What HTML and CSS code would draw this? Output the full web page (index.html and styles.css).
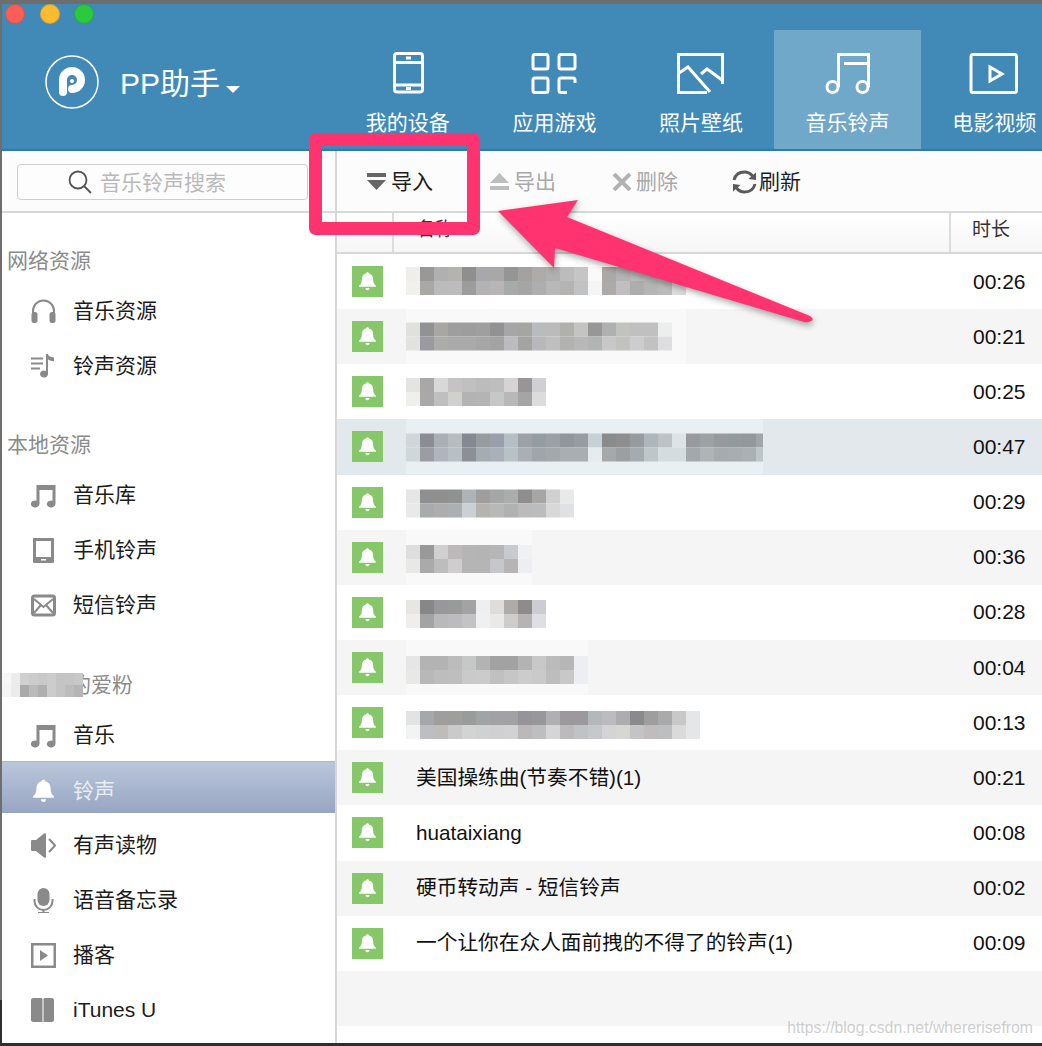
FILE: index.html
```html
<!DOCTYPE html>
<html lang="zh-CN">
<head>
<meta charset="utf-8">
<title>PP助手</title>
<link rel="stylesheet" href="styles.css">
</head>
<body>
<svg class="defs" width="0" height="0">
  <symbol id="bell" viewBox="0 0 24 24"><path d="M12 1.5c1 0 1.700.7 1.800 1.600 3.400.8 5 3.500 5 7 0 3.800 1 5.700 3.200 7.400v1.500H2v-1.500c2.200-1.700 3.200-3.600 3.200-7.400 0-3.500 1.600-6.200 5-7 .1-.9.800-1.600 1.800-1.600zM9.500 20.500h5c0 1.500-1 2.500-2.500 2.500s-2.500-1-2.500-2.500z"/></symbol>
  <symbol id="note" viewBox="0 0 25 25"><path d="M5.500 2h19v19h-.1a4.300 3.500 0 1 1-2.900-3.300V7H8.500v14h-.1a4.300 3.500 0 1 1-2.900-3.300z"/></symbol>
</svg>
<div class="app">
  <header class="header">
    <div class="lights"><i class="light red"></i><i class="light yellow"></i><i class="light green"></i></div>
    <div class="brand">
      <svg class="logo" width="56" height="56" viewBox="0 0 56 56">
        <circle cx="28" cy="28" r="26" fill="none" stroke="#fff" stroke-width="1.500"/>
        <path d="M19 38V26a9 9 0 1 1 9 9" fill="none" stroke="#fff" stroke-width="8" stroke-linecap="round"/>
        <circle cx="28" cy="27" r="2" fill="#fff"/>
      </svg>
      <span class="brand-name">PP助手</span>
      <i class="caret"></i>
    </div>
    <nav class="tabs">
      <div class="tab">
        <svg class="tab-icon" width="60" height="44" viewBox="0 0 60 44"><rect x="16.500" y="2.500" width="28" height="38.500" rx="2.500"/><path d="M17 11.500h27M17 34h27M28 7h5M28 37.500h5"/></svg>
        <span>我的设备</span>
      </div>
      <div class="tab">
        <svg class="tab-icon" width="60" height="44" viewBox="0 0 60 44"><rect x="9" y="3.500" width="15" height="14.500" rx="2"/><rect x="35" y="3.500" width="16" height="14.500" rx="2"/><rect x="9" y="27" width="15" height="14.500" rx="2"/><path d="M51 32v-3a2 2 0 0 0-2-2H37a2 2 0 0 0-2 2v10.500a2 2 0 0 0 2 2h6"/></svg>
        <span>应用游戏</span>
      </div>
      <div class="tab">
        <svg class="tab-icon" width="60" height="44" viewBox="0 0 60 44"><path d="M36 41.500H7.500V3.500h44V33"/><path d="M8 22l9-6 22 25M30 23l6-5 15 11"/></svg>
        <span>照片壁纸</span>
      </div>
      <div class="tab active">
        <svg class="tab-icon" width="60" height="44" viewBox="0 0 60 44"><circle cx="14.500" cy="36" r="5.500"/><circle cx="44.500" cy="36" r="5.500"/><path d="M20.500 36V3.500h30V36M26 12.500h24"/></svg>
        <span>音乐铃声</span>
      </div>
      <div class="tab">
        <svg class="tab-icon" width="60" height="44" viewBox="0 0 60 44"><rect x="7" y="3.500" width="45.500" height="38" rx="2"/><path d="M26 16l12 7-12 7z"/></svg>
        <span>电影视频</span>
      </div>
    </nav>
  </header>

  <div class="main">
    <aside class="sidebar">
      <div class="search-bar">
        <div class="search">
          <svg width="26" height="26" viewBox="0 0 26 26" class="search-icon"><circle cx="10" cy="11" r="8.500"/><path d="M16 17l7 7"/></svg>
          <span>音乐铃声搜索</span>
        </div>
      </div>
      <div class="section first"><span class="section-label">网络资源</span></div>
      <div class="item">
        <svg class="item-icon" width="25" height="25" viewBox="0 0 25 25"><path class="line thin" d="M2 15v-3a10.500 10.500 0 0 1 21 0v3" /><rect x="0.500" y="13" width="6" height="11" rx="2.500"/><rect x="18.500" y="13" width="6" height="11" rx="2.500"/></svg>
        <span>音乐资源</span>
      </div>
      <div class="item">
        <svg class="item-icon" width="25" height="25" viewBox="0 0 25 25"><path class="line thin" d="M0 4.500h12M0 9.500h12M0 14.500h9"/><path d="M15 0h2c0 2 2 3 6 3.500V7c-3 0-5-.8-6-1.800V20a4 3.500 0 1 1-2-3z"/></svg>
        <span>铃声资源</span>
      </div>
      <div class="section second"><span class="section-label">本地资源</span></div>
      <div class="item">
        <svg class="item-icon" width="25" height="25"><use href="#note"/></svg>
        <span>音乐库</span>
      </div>
      <div class="item">
        <svg class="item-icon" width="25" height="25" viewBox="0 0 25 25"><path fill-rule="evenodd" d="M3 0h19a1 1 0 0 1 1 1v23a1 1 0 0 1-1 1H3a1 1 0 0 1-1-1V1a1 1 0 0 1 1-1zm2 3v16h15V3zM10 21v1.500h5V21z"/></svg>
        <span>手机铃声</span>
      </div>
      <div class="item">
        <svg class="item-icon" width="25" height="25" viewBox="0 0 25 25"><rect class="line" x="1.500" y="3" width="22" height="19" rx="2"/><path class="line thin" d="M3 6l9.500 8L22 6M3 20l7-8M22 20l-7-8"/></svg>
        <span>短信铃声</span>
      </div>
      <div class="section">
        <span class="section-label fans">的爱粉</span>
        <svg class="fans-blur" width="83" height="24">
          <rect x="2" fill="#f7f7f7"/><rect x="11" fill="#ececec"/><rect x="20" fill="#d0d0d0"/><rect x="29" fill="#ccc"/><rect x="38" fill="#c8c8c8"/><rect x="47" fill="#ccc"/><rect x="56" fill="#c4c4c4"/><rect x="65" fill="#c5c5c5"/><rect x="74" fill="#c8c8c8"/>
          <g transform="translate(0,12)"><rect x="2" fill="#f5f5f5"/><rect x="11" fill="#ececec"/><rect x="20" fill="#aaa"/><rect x="29" fill="#bbb"/><rect x="38" fill="#b0b0b0"/><rect x="47" fill="#ccc"/><rect x="56" fill="#c4c4c4"/><rect x="65" fill="#bcbcbc"/><rect x="74" fill="#b5b5b5"/></g>
        </svg>
      </div>
      <div class="item">
        <svg class="item-icon" width="25" height="25"><use href="#note"/></svg>
        <span>音乐</span>
      </div>
      <div class="item selected">
        <svg class="item-icon" width="25" height="25"><use href="#bell"/></svg>
        <span>铃声</span>
      </div>
      <div class="item">
        <svg class="item-icon" width="25" height="25" viewBox="0 0 25 25"><path d="M0 8q0-1 1-1h4l8-6.500q2-1 2 1v22q0 2-2 1L5 18H1q-1 0-1-1z"/><path class="line thin" d="M18 6l6 6.500-6 6.500"/></svg>
        <span>有声读物</span>
      </div>
      <div class="item">
        <svg class="item-icon" width="25" height="25" viewBox="0 0 25 25"><rect x="6.500" y="0" width="12" height="18" rx="6"/><path class="line thin" d="M3.500 11v2a9 9 0 0 0 18 0v-2M12.500 22v3M7 25h11"/></svg>
        <span>语音备忘录</span>
      </div>
      <div class="item">
        <svg class="item-icon" width="25" height="25" viewBox="0 0 25 25"><rect class="line" x="1" y="1" width="23" height="23"/><path d="M9 7l8 5.500-8 5.500z"/></svg>
        <span>播客</span>
      </div>
      <div class="item">
        <svg class="item-icon" width="25" height="25" viewBox="0 0 25 25"><path d="M2 0h8c1 0 1.500.5 1.500 1.500V24h-9C1 24 0 23 0 22V2C0 1 1 0 2 0zM12.500 1.500c0-1 .5-1.500 1.500-1.500H21c1 0 2 1 2 2v20c0 1-1 2-2 2h-8.500z"/></svg>
        <span class="latin">iTunes U</span>
      </div>
    </aside>

    <section class="content">
      <div class="toolbar">
        <div class="tool import">
          <svg width="20" height="18" viewBox="0 0 20 18"><path d="M0 0h19v4H0zM0 7h19l-9.500 10z"/></svg>
          <span>导入</span>
        </div>
        <div class="tool disabled">
          <svg width="20" height="18" viewBox="0 0 20 18"><path d="M9.500 0L19 10H0zM0 13h19v4H0z"/></svg>
          <span>导出</span>
        </div>
        <div class="tool disabled">
          <svg class="cross" width="20" height="18" viewBox="0 0 20 18"><path d="M2 1l16 16M18 1L2 17"/></svg>
          <span>删除</span>
        </div>
        <div class="tool refresh">
          <svg width="25" height="24" viewBox="0 0 25 24"><path class="arc" d="M2 10C3.500 4 8 2 12.500 2c3.500 0 6 1.500 8 4M23 14c-1.500 6-6 8-10.500 8-3.500 0-6-1.500-8-4"/><path d="M16.500 9L24 10V2.500zM8.500 15L1 14v7.500z"/></svg>
          <span>刷新</span>
        </div>
      </div>
      <div class="thead">
        <div class="th th-icon"></div>
        <div class="th th-name">名称</div>
        <div class="th th-time">时长</div>
      </div>
      <div class="rows">
        <div class="row">
          <span class="badge"><svg width="31" height="31"><use href="#bell" x="5.500" y="5" width="20" height="20"/></svg></span>
          <div class="name"><svg class="mosaic" width="357" height="55"><g transform="translate(0,13)"><rect x="0" fill="#efeeeb"/><rect x="14" fill="#9a9897"/><rect x="28" fill="#b0b0b0"/><rect x="42" fill="#b5b3b0"/><rect x="56" fill="#908f8f"/><rect x="70" fill="#a8a7ab"/><rect x="84" fill="#a9a8a8"/><rect x="98" fill="#959596"/><rect x="112" fill="#a3a2a1"/><rect x="126" fill="#adacab"/><rect x="140" fill="#b0b0b0"/><rect x="154" fill="#bcbcbc"/><rect x="168" fill="#c5c5c5"/><rect x="182" fill="#fafafa"/><rect x="196" fill="#aba8a8"/><rect x="210" fill="#b5b3b4"/><rect x="224" fill="#bbb"/><rect x="238" fill="#bbb"/><rect x="252" fill="#c2c2c2"/></g><g transform="translate(0,27)"><rect x="0" fill="#f0f0ec"/><rect x="14" fill="#a9a8a6"/><rect x="28" fill="#bbb"/><rect x="42" fill="#bcbcbc"/><rect x="56" fill="#9c9c9c"/><rect x="70" fill="#b4b3b4"/><rect x="84" fill="#b8b4b8"/><rect x="98" fill="#a8aaa9"/><rect x="112" fill="#a5a5a5"/><rect x="126" fill="#aeaeae"/><rect x="140" fill="#b8b8b8"/><rect x="154" fill="#b5b4b2"/><rect x="168" fill="#c0c2c4"/><rect x="182" fill="#f5f5f5"/><rect x="196" fill="#adaaaa"/><rect x="210" fill="#c0bec0"/><rect x="224" fill="#adadad"/><rect x="238" fill="#b5b5b5"/><rect x="252" fill="#bbb"/><rect x="266" fill="#dcdcdc"/></g></svg></div>
          <span class="time">00:26</span>
        </div>
        <div class="row even">
          <span class="badge"><svg width="31" height="31"><use href="#bell" x="5.500" y="5" width="20" height="20"/></svg></span>
          <div class="name"><svg class="mosaic patch" width="280" height="55"><g transform="translate(0,13.500)"><rect x="0" fill="#e0e0dc"/><rect x="14" fill="#909293"/><rect x="28" fill="#a9a7a4"/><rect x="42" fill="#9e9e9e"/><rect x="56" fill="#9d9d9d"/><rect x="70" fill="#9f9f9f"/><rect x="84" fill="#929295"/><rect x="98" fill="#a6a5a8"/><rect x="112" fill="#a5a5a2"/><rect x="126" fill="#b9bcbe"/><rect x="140" fill="#bbb"/><rect x="154" fill="#b0b0ac"/><rect x="168" fill="#c4c4c2"/><rect x="182" fill="#979797"/><rect x="196" fill="#afb0b0"/><rect x="210" fill="#c2c2be"/><rect x="224" fill="#c0c0c0"/><rect x="238" fill="#c0c0c0"/><rect x="252" fill="#eceeee"/></g><g transform="translate(0,27.500)"><rect x="0" fill="#e2e2e0"/><rect x="14" fill="#9a9a9f"/><rect x="28" fill="#acacaa"/><rect x="42" fill="#aaa"/><rect x="56" fill="#aaa"/><rect x="70" fill="#a6a6a6"/><rect x="84" fill="#a3a3a1"/><rect x="98" fill="#bcbcc0"/><rect x="112" fill="#a4a4a2"/><rect x="126" fill="#b8b8bc"/><rect x="140" fill="#bfbfc0"/><rect x="154" fill="#b2b2b0"/><rect x="168" fill="#b8b8b8"/><rect x="182" fill="#b2b4b4"/><rect x="196" fill="#c8c8c8"/><rect x="210" fill="#c2c2c0"/><rect x="224" fill="#cdcdd0"/><rect x="238" fill="#c2c2c2"/><rect x="252" fill="#dedee0"/></g></svg></div>
          <span class="time">00:21</span>
        </div>
        <div class="row">
          <span class="badge"><svg width="31" height="31"><use href="#bell" x="5.500" y="5" width="20" height="20"/></svg></span>
          <div class="name"><svg class="mosaic" width="140" height="55"><g transform="translate(0,14)"><rect x="0" fill="#e4e4e2"/><rect x="14" fill="#a8a8a8"/><rect x="28" fill="#d8d8d8"/><rect x="42" fill="#c6c3c4"/><rect x="56" fill="#c0c0c0"/><rect x="70" fill="#bcbcbc"/><rect x="84" fill="#bebebe"/><rect x="98" fill="#d5d3d4"/><rect x="112" fill="#989596"/><rect x="126" fill="#d0d0d4"/></g><g transform="translate(0,28)"><rect x="0" fill="#efefeb"/><rect x="14" fill="#aaa8a9"/><rect x="28" fill="#c0bfc0"/><rect x="42" fill="#d0d0ce"/><rect x="56" fill="#b4b3b3"/><rect x="70" fill="#b4b4b4"/><rect x="84" fill="#c6c7c9"/><rect x="98" fill="#b8b8b8"/><rect x="112" fill="#a5a5a5"/><rect x="126" fill="#dcdcdc"/></g></svg></div>
          <span class="time">00:25</span>
        </div>
        <div class="row hover">
          <span class="badge"><svg width="31" height="31"><use href="#bell" x="5.500" y="5" width="20" height="20"/></svg></span>
          <div class="name"><svg class="mosaic patch" width="357" height="55"><g transform="translate(0,14.500)"><rect x="0" fill="#cfd7db"/><rect x="14" fill="#8a8e94"/><rect x="28" fill="#a8b0b5"/><rect x="42" fill="#b5bdc0"/><rect x="56" fill="#858a92"/><rect x="70" fill="#979ca0"/><rect x="84" fill="#999fac"/><rect x="98" fill="#b5bec2"/><rect x="112" fill="#9ba1a6"/><rect x="126" fill="#949da1"/><rect x="140" fill="#9aa0a5"/><rect x="154" fill="#8f979d"/><rect x="168" fill="#949da1"/><rect x="182" fill="#c7d0d5"/><rect x="196" fill="#8a8c8c"/><rect x="210" fill="#8f8f8f"/><rect x="224" fill="#959b9f"/><rect x="238" fill="#adb6ba"/><rect x="252" fill="#bcc3c7"/><rect x="266" fill="#dde3e6"/><rect x="280" fill="#999a9f"/><rect x="294" fill="#9da2a5"/><rect x="308" fill="#969b9f"/><rect x="322" fill="#939a9e"/><rect x="336" fill="#93989c"/><rect x="350" fill="#a0a5aa"/></g><g transform="translate(0,28.500)"><rect x="0" fill="#cfd7db"/><rect x="14" fill="#9a9ea3"/><rect x="28" fill="#aeb5bd"/><rect x="42" fill="#b8c0c4"/><rect x="56" fill="#8b9096"/><rect x="70" fill="#a4aeb2"/><rect x="84" fill="#a9b0ba"/><rect x="98" fill="#b8c1c5"/><rect x="112" fill="#a9afb4"/><rect x="126" fill="#9fa5aa"/><rect x="140" fill="#a3a8ad"/><rect x="154" fill="#a8aeb2"/><rect x="168" fill="#a9aeb3"/><rect x="182" fill="#e5ecf0"/><rect x="196" fill="#a5a9aa"/><rect x="210" fill="#9c9f9f"/><rect x="224" fill="#a3acb0"/><rect x="238" fill="#bdc7ca"/><rect x="252" fill="#d5dcdf"/><rect x="266" fill="#d5dcdf"/><rect x="280" fill="#a3a8ac"/><rect x="294" fill="#afb4b7"/><rect x="308" fill="#a6abb0"/><rect x="322" fill="#a8adb1"/><rect x="336" fill="#abb0b5"/><rect x="350" fill="#bec5c8"/></g></svg></div>
          <span class="time">00:47</span>
        </div>
        <div class="row">
          <span class="badge"><svg width="31" height="31"><use href="#bell" x="5.500" y="5" width="20" height="20"/></svg></span>
          <div class="name"><svg class="mosaic" width="168" height="55"><g transform="translate(0,14.500)"><rect x="0" fill="#e5e6e5"/><rect x="14" fill="#8e8f91"/><rect x="28" fill="#8f8f8e"/><rect x="42" fill="#909292"/><rect x="56" fill="#b0b3b5"/><rect x="70" fill="#a09e9c"/><rect x="84" fill="#a4a6a8"/><rect x="98" fill="#abadac"/><rect x="112" fill="#8f8e8d"/><rect x="126" fill="#a6a6a6"/><rect x="140" fill="#d0d0d0"/><rect x="154" fill="#e8eaea"/></g><g transform="translate(0,28.500)"><rect x="0" fill="#e8eae8"/><rect x="14" fill="#a8aaac"/><rect x="28" fill="#adadad"/><rect x="42" fill="#abb0b0"/><rect x="56" fill="#cdd0d3"/><rect x="70" fill="#b5b3b0"/><rect x="84" fill="#b8b8b8"/><rect x="98" fill="#b0b2b2"/><rect x="112" fill="#bbb"/><rect x="126" fill="#babcbe"/><rect x="140" fill="#d8d8d8"/><rect x="154" fill="#dfe1e3"/></g></svg></div>
          <span class="time">00:29</span>
        </div>
        <div class="row even">
          <span class="badge"><svg width="31" height="31"><use href="#bell" x="5.500" y="5" width="20" height="20"/></svg></span>
          <div class="name"><svg class="mosaic patch" width="126" height="55"><g transform="translate(0,15)"><rect x="0" fill="#dedede"/><rect x="14" fill="#999"/><rect x="28" fill="#d0d0d0"/><rect x="42" fill="#bdb9ba"/><rect x="56" fill="#b5b5b5"/><rect x="70" fill="#b4b4b4"/><rect x="84" fill="#b6b6b8"/><rect x="98" fill="#c8cacd"/><rect x="112" fill="#eff1f2"/></g><g transform="translate(0,29)"><rect x="0" fill="#e8e8e6"/><rect x="14" fill="#aaa"/><rect x="28" fill="#bdbdbd"/><rect x="42" fill="#cfcdce"/><rect x="56" fill="#b5b5b5"/><rect x="70" fill="#b5b5b5"/><rect x="84" fill="#c6c7ca"/><rect x="98" fill="#b6b4b5"/><rect x="112" fill="#eceef1"/></g></svg></div>
          <span class="time">00:36</span>
        </div>
        <div class="row">
          <span class="badge"><svg width="31" height="31"><use href="#bell" x="5.500" y="5" width="20" height="20"/></svg></span>
          <div class="name"><svg class="mosaic" width="140" height="55"><g transform="translate(0,15)"><rect x="0" fill="#e8e6e3"/><rect x="14" fill="#878787"/><rect x="28" fill="#98989b"/><rect x="42" fill="#999b9b"/><rect x="56" fill="#a3a3a3"/><rect x="70" fill="#edeff0"/><rect x="84" fill="#dfdddc"/><rect x="98" fill="#aeaca9"/><rect x="112" fill="#8f8b8c"/><rect x="126" fill="#cdccd2"/></g><g transform="translate(0,29)"><rect x="0" fill="#f0eeed"/><rect x="14" fill="#a2a4a4"/><rect x="28" fill="#b9b9bc"/><rect x="42" fill="#bcbcbe"/><rect x="56" fill="#c3c3c6"/><rect x="70" fill="#eff0f2"/><rect x="84" fill="#ebe9e8"/><rect x="98" fill="#cfcdcb"/><rect x="112" fill="#b6b3b5"/><rect x="126" fill="#dfdfe3"/></g></svg></div>
          <span class="time">00:28</span>
        </div>
        <div class="row even">
          <span class="badge"><svg width="31" height="31"><use href="#bell" x="5.500" y="5" width="20" height="20"/></svg></span>
          <div class="name"><svg class="mosaic patch" width="182" height="55"><g transform="translate(0,16)"><rect x="0" fill="#e6e6e6"/><rect x="14" fill="#b3b3b3"/><rect x="28" fill="#b3b3b3"/><rect x="42" fill="#bcbcbc"/><rect x="56" fill="#c6c8c8"/><rect x="70" fill="#b3b3b3"/><rect x="84" fill="#a2a2a2"/><rect x="98" fill="#a2a2a2"/><rect x="112" fill="#b3b3b3"/><rect x="126" fill="#c8c8c8"/><rect x="140" fill="#bbb"/><rect x="154" fill="#b6b6b6"/><rect x="168" fill="#eceef2"/></g><g transform="translate(0,30)"><rect x="0" fill="#e8e8e6"/><rect x="14" fill="#b8b8b8"/><rect x="28" fill="#bdbdbd"/><rect x="42" fill="#bebebe"/><rect x="56" fill="#cacaca"/><rect x="70" fill="#cbcbcb"/><rect x="84" fill="#c0c0c0"/><rect x="98" fill="#c6c6c6"/><rect x="112" fill="#ccc"/><rect x="126" fill="#cacaca"/><rect x="140" fill="#bdbdbd"/><rect x="154" fill="#c8c8c8"/><rect x="168" fill="#eceef2"/></g></svg></div>
          <span class="time">00:04</span>
        </div>
        <div class="row">
          <span class="badge"><svg width="31" height="31"><use href="#bell" x="5.500" y="5" width="20" height="20"/></svg></span>
          <div class="name"><svg class="mosaic" width="294" height="55"><g transform="translate(0,16)"><rect x="0" fill="#e3e3e5"/><rect x="14" fill="#a5a8ab"/><rect x="28" fill="#a09e9c"/><rect x="42" fill="#9e9e9c"/><rect x="56" fill="#9a9b9b"/><rect x="70" fill="#a0a4a4"/><rect x="84" fill="#a2a2a4"/><rect x="98" fill="#a2a2a4"/><rect x="112" fill="#96949a"/><rect x="126" fill="#98989b"/><rect x="140" fill="#b0b0b2"/><rect x="154" fill="#9b999b"/><rect x="168" fill="#9b999b"/><rect x="182" fill="#b5b8b8"/><rect x="196" fill="#bcbcc0"/><rect x="210" fill="#aeacae"/><rect x="224" fill="#8a8a8c"/><rect x="238" fill="#9e9e9e"/><rect x="252" fill="#aaa"/><rect x="266" fill="#c8c8c8"/><rect x="280" fill="#e4e6e8"/></g><g transform="translate(0,30)"><rect x="0" fill="#f2f4f4"/><rect x="14" fill="#bcbec2"/><rect x="28" fill="#bfbcbc"/><rect x="42" fill="#cacaca"/><rect x="56" fill="#d2d4d4"/><rect x="70" fill="#d0d2d2"/><rect x="84" fill="#d0d0d2"/><rect x="98" fill="#d2d2d4"/><rect x="112" fill="#bab8b8"/><rect x="126" fill="#bcbec0"/><rect x="140" fill="#d5d5d5"/><rect x="154" fill="#bcbaba"/><rect x="168" fill="#c0c2c4"/><rect x="182" fill="#c6c8cc"/><rect x="196" fill="#d4d4d6"/><rect x="210" fill="#d6d6d2"/><rect x="224" fill="#c4c4c6"/><rect x="238" fill="#c0bcbe"/><rect x="252" fill="#bcbec0"/><rect x="266" fill="#dadada"/><rect x="280" fill="#e4e6e8"/></g></svg></div>
          <span class="time">00:13</span>
        </div>
        <div class="row even">
          <span class="badge"><svg width="31" height="31"><use href="#bell" x="5.500" y="5" width="20" height="20"/></svg></span>
          <div class="name title">美国操练曲(节奏不错)(1)</div>
          <span class="time">00:21</span>
        </div>
        <div class="row">
          <span class="badge"><svg width="31" height="31"><use href="#bell" x="5.500" y="5" width="20" height="20"/></svg></span>
          <div class="name title">huataixiang</div>
          <span class="time">00:08</span>
        </div>
        <div class="row even">
          <span class="badge"><svg width="31" height="31"><use href="#bell" x="5.500" y="5" width="20" height="20"/></svg></span>
          <div class="name title">硬币转动声 - 短信铃声</div>
          <span class="time">00:02</span>
        </div>
        <div class="row">
          <span class="badge"><svg width="31" height="31"><use href="#bell" x="5.500" y="5" width="20" height="20"/></svg></span>
          <div class="name title">一个让你在众人面前拽的不得了的铃声(1)</div>
          <span class="time">00:09</span>
        </div>
        <div class="row even"></div>
      </div>
    </section>
  </div>
</div>

<svg class="markup" width="1042" height="1046" viewBox="0 0 1042 1046">
  <rect class="frame" x="315.500" y="139.500" width="158" height="89"/>
  <path class="arrow" d="M498 211L578 200L567 217L810 316Q815 320 811 321Q808 323 804 322L555 248L554 268Z"/>
</svg>
<div class="watermark">https://blog.csdn.net/whererisefrom</div>
</body>
</html>
```
FILE: styles.css
```css
* { box-sizing: border-box; }

html, body {
  margin: 0;
  padding: 0;
}

body {
  position: relative;
  width: 1042px;
  height: 1046px;
  overflow: hidden;
  background: #6e6e6e;
  font-family: "Liberation Sans", "Noto Sans CJK SC", sans-serif;
  font-size: 21px;
  color: #1c1c1c;
}

.defs { position: absolute; }

.app {
  display: flex;
  flex-direction: column;
  height: 1046px;
  padding: 4px 0 3px 2px;
  background: linear-gradient(#6e6e6e 0 1000px, #2e2e2e 1000px);
}

/* Header */
.header {
  position: relative;
  display: flex;
  flex: none;
  height: 147px;
  background: #418ab7;
  border-bottom: 2px solid #2f7aa8;
  overflow: hidden;
}

.lights {
  position: absolute;
  top: 0;
  left: 3px;
  display: flex;
  gap: 14.500px;
}

.light {
  width: 20px;
  height: 20px;
  border-radius: 50%;
  border: 1px solid rgba(0, 0, 0, .12);
}
.red { background: #fc5d57; }
.yellow { background: #fdbb30; }
.green { background: #2bc840; }

.brand {
  flex: none;
  display: flex;
  align-items: center;
  width: 332.500px;
  height: 100%;
  padding: 10px 0 0 42px;
  color: #fff;
}

.brand-name {
  margin: 5px 0 0 20px;
  font-size: 30px;
  line-height: 40px;
}

.caret {
  width: 0;
  height: 0;
  margin: 15px 0 0 6px;
  border-left: 7.500px solid transparent;
  border-right: 7.500px solid transparent;
  border-top: 7px solid #fff;
}

.tabs {
  display: flex;
  flex: none;
  margin-top: 26px;
}

.tab {
  flex: none;
  display: flex;
  flex-direction: column;
  align-items: center;
  width: 146.600px;
  height: 120px;
  padding-top: 21px;
  color: #fff;
}

.tab span {
  margin-top: 14px;
  line-height: 28px;
}

.tab.active { background: #70a8ca; }

.tab-icon {
  display: block;
  fill: none;
  stroke: #fff;
  stroke-width: 3;
}

/* Layout */
.main {
  display: flex;
  flex: 1;
  min-height: 0;
  background: #fff;
}

/* Sidebar */
.sidebar {
  flex: none;
  width: 335px;
  border-right: 2px solid #d8d8d8;
}

.search-bar {
  height: 62px;
  padding: 13px 27px 0 15px;
  background: #fcfcfc;
  border-bottom: 2px solid #d8d8d8;
}

.search {
  display: flex;
  align-items: center;
  height: 36px;
  padding: 2px 0 0 50px;
  background: #fdfdfd;
  border: 1px solid #cfcfcf;
  border-radius: 4px;
  color: #b9b9b9;
  line-height: 32px;
}

.search-icon {
  flex: none;
  margin: -2px 6px 0 0;
  fill: none;
  stroke: #555;
  stroke-width: 1.800;
}

.section {
  position: relative;
  display: flex;
  align-items: flex-end;
  height: 75px;
  padding-left: 5px;
}
.section.first { height: 69px; }
.section.second { height: 74px; }

.section-label {
  line-height: 42px;
  color: #8b8b8b;
}
.section-label.fans { padding-left: 63px; }

.fans-blur {
  position: absolute;
  left: -2px;
  bottom: 9px;
}
.fans-blur rect { width: 9px; height: 12px; }

.item {
  display: flex;
  align-items: center;
  height: 52px;
  margin-bottom: 3px;
  padding: 6px 0 0 29px;
  color: #1c1c1c;
}

.item span { margin-left: 17px; line-height: 30px; }

.item-icon {
  flex: none;
  display: block;
  fill: #8a8a8a;
}

.line {
  fill: none;
  stroke: #8a8a8a;
  stroke-width: 3;
}
.line.thin { stroke-width: 2; }

.item.selected {
  background: linear-gradient(#bac6da, #97a6c3);
  border-top: 1px solid #aab7d0;
  color: #e9edf4;
}
.item.selected .item-icon { fill: #fff; }

/* Toolbar */
.content {
  flex: 1;
  min-width: 0;
  display: flex;
  flex-direction: column;
}

.toolbar {
  flex: none;
  display: flex;
  align-items: center;
  gap: 56px;
  height: 62px;
  padding: 2px 0 0 30px;
  background: #fcfcfc;
  border-bottom: 2px solid #d8d8d8;
}

.tool {
  display: flex;
  align-items: center;
  gap: 4px;
  color: #1c1c1c;
  line-height: 30px;
}
.tool svg { display: block; fill: #666; }
.tool.import { margin-right: 1px; }

.tool.disabled { color: #a9a9a9; }
.tool.disabled svg { fill: #bdbdbd; }
.tool .cross { fill: none; stroke: #b2b2b2; stroke-width: 4; }
.tool.refresh { gap: 2px; margin-left: -2px; }
.tool svg .arc { fill: none; stroke: #5a5a5a; stroke-width: 3; }
.tool.refresh svg { fill: #5a5a5a; }

/* Table */
.thead {
  flex: none;
  display: flex;
  height: 41px;
  background: linear-gradient(#fff, #f6f6f6);
  border-bottom: 2px solid #d8d8d8;
  font-size: 19px;
  line-height: 33px;
  color: #333;
}

.th { border-right: 2px solid #dcdcdc; }
.th-icon { width: 57px; }
.th-name { width: 557px; padding-left: 22px; }
.th-time { flex: 1; padding-left: 21px; border-right: 0; }

.rows {
  flex: 1;
  min-height: 0;
  overflow: hidden;
}

.row {
  display: flex;
  align-items: center;
  height: 55.150px;
  padding-left: 15px;
}
.row.even { background: #f5f5f5; }
.row.hover { background: #e2e8ec; }

.badge {
  flex: none;
  width: 31px;
  height: 31px;
  background: #86c76a;
  fill: #fff;
}
.badge svg { display: block; }

.name {
  flex: 1;
  align-self: stretch;
  margin-left: 23px;
  overflow: hidden;
}
.name.title {
  align-self: center;
  padding-left: 10px;
  font-size: 20.700px;
  line-height: 30px;
  color: #111;
}

.mosaic { display: block; }
.mosaic rect { width: 14px; height: 14px; }
.even .mosaic.patch { background: #f9f9f9; }
.hover .mosaic.patch { background: #e9eff3; }

.time {
  flex: none;
  width: 69px;
  color: #111;
}

/* Annotation layer */
.markup {
  position: absolute;
  top: 0;
  left: 0;
  pointer-events: none;
}

.frame {
  fill: none;
  stroke: #ff3370;
  stroke-width: 13;
  stroke-linejoin: round;
}

.arrow {
  fill: #ff3370;
  filter: drop-shadow(1px 3px 3px rgba(0, 0, 0, .35));
}

.watermark {
  position: absolute;
  right: 9px;
  bottom: 9px;
  font-size: 15.800px;
  line-height: 18px;
  color: rgba(190, 190, 190, .75);
}
```
